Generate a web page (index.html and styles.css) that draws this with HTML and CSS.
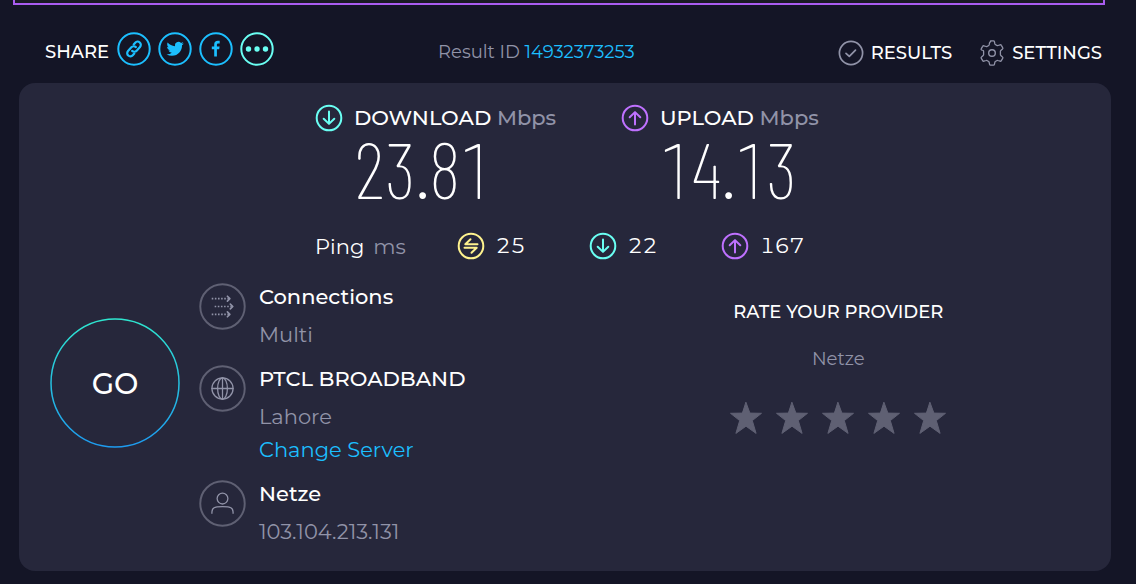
FILE: index.html
```html
<!DOCTYPE html>
<html lang="en">
<head>
<meta charset="utf-8">
<meta name="viewport" content="width=device-width, initial-scale=1">
<title>Speed test result</title>
<link rel="stylesheet" href="styles.css">
</head>
<body>
<svg class="defs" aria-hidden="true">
  <defs>
    <symbol id="down" viewBox="0 0 28 28"><circle cx="14" cy="14" r="12.3"/><path d="M14 7.5v12M8.7 14.7l5.3 5.2 5.3-5.2"/></symbol>
    <symbol id="up" viewBox="0 0 28 28"><circle cx="14" cy="14" r="12.3"/><path d="M14 20.5v-12M8.7 13.3L14 8.1l5.3 5.2"/></symbol>
    <symbol id="star" viewBox="0 0 34 34"><path d="M17 1.500l3.900 10.600 11.600.2-9.200 7.300 3.800 12.800L17 25.200 6.900 32.400l3.800-12.800-9.200-7.300 11.600-.2z"/></symbol>
  </defs>
</svg>

<div class="banner"></div>

<header class="topbar">
  <div class="share">
    <span class="share-label">SHARE</span>
    <button class="share-button" type="button" aria-label="Copy link">
      <svg viewBox="0 0 34 34"><circle cx="17" cy="17" r="15.700"/><g transform="rotate(-48 17 17)" stroke-width="2.200"><path d="M13.800 20.300h-2.300a3.200 3.200 0 0 1 0-6.400h5a3.200 3.200 0 0 1 3.200 3.200"/><path d="M20.200 13.700h2.300a3.200 3.200 0 0 1 0 6.400h-5a3.200 3.200 0 0 1-3.200-3.200"/></g></svg>
    </button>
    <button class="share-button" type="button" aria-label="Share on Twitter">
      <svg viewBox="0 0 34 34"><circle cx="17" cy="17" r="15.700"/><path class="solid" transform="translate(8.500 8.200) scale(.72)" d="M23.950 4.570a10 10 0 0 1-2.820.770 4.960 4.960 0 0 0 2.160-2.720c-.95.550-2 .96-3.130 1.180a4.920 4.920 0 0 0-8.380 4.480C7.690 8.090 4.070 6.130 1.640 3.160a4.820 4.820 0 0 0-.67 2.480c0 1.710.87 3.210 2.190 4.100a4.900 4.900 0 0 1-2.230-.62v.06a4.920 4.920 0 0 0 3.950 4.830 5 5 0 0 1-2.210.080 4.940 4.940 0 0 0 4.600 3.420A9.870 9.870 0 0 1 0 19.540a13.990 13.990 0 0 0 7.550 2.210c9.050 0 14-7.500 14-13.990 0-.210 0-.420-.02-.63a9.940 9.940 0 0 0 2.420-2.560z"/></svg>
    </button>
    <button class="share-button" type="button" aria-label="Share on Facebook">
      <svg viewBox="0 0 34 34"><circle cx="17" cy="17" r="15.700"/><path class="solid" d="M15.200 24.500v-7.200h-2.400v-2.800h2.400v-2.100c0-2.400 1.400-3.700 3.600-3.700.8 0 1.500.1 1.900.1v2.600h-1.400c-1.100 0-1.400.6-1.400 1.300v1.800h2.700l-.4 2.800h-2.300v7.200z"/></svg>
    </button>
    <button class="share-button more" type="button" aria-label="More sharing options">
      <svg viewBox="0 0 34 34"><circle cx="17" cy="17" r="15.700"/><g class="solid"><circle cx="8.500" cy="17" r="2.700"/><circle cx="17" cy="17" r="2.700"/><circle cx="25.500" cy="17" r="2.700"/></g></svg>
    </button>
  </div>
  <p class="result-id">Result ID <a href="#result">14932373253</a></p>
  <nav class="menu">
    <a href="#results"><svg viewBox="0 0 26 26"><circle cx="13" cy="13" r="11.600" stroke-width="1.700"/><path stroke-width="1.700" d="M8 13.300l3.300 3.100 6.200-6.300"/></svg>RESULTS</a>
    <a href="#settings"><svg viewBox="0 0 26 26"><path stroke-width="1.300" d="M11.600.8h2.800a1 1 0 0 1 1 .8l.5 2.300a1.200 1.200 0 0 0 .7.800l1.300.7a1.200 1.200 0 0 0 1 .1l2.200-.7a1 1 0 0 1 1.200.5l1.400 2.400a1 1 0 0 1-.2 1.300l-1.700 1.500a1.200 1.200 0 0 0-.4 1v3a1.200 1.200 0 0 0 .4 1l1.700 1.500a1 1 0 0 1 .2 1.300l-1.400 2.400a1 1 0 0 1-1.200.5l-2.200-.7a1.200 1.200 0 0 0-1 .1l-1.300.7a1.200 1.200 0 0 0-.7.800l-.5 2.300a1 1 0 0 1-1 .8h-2.800a1 1 0 0 1-1-.8l-.5-2.300a1.200 1.200 0 0 0-.7-.8l-1.300-.7a1.200 1.200 0 0 0-1-.1l-2.200.7a1 1 0 0 1-1.200-.5l-1.400-2.400a1 1 0 0 1 .2-1.300l1.700-1.500a1.200 1.200 0 0 0 .4-1v-3a1.200 1.200 0 0 0-.4-1L2.500 10a1 1 0 0 1-.2-1.300l1.400-2.400a1 1 0 0 1 1.200-.5l2.200.7a1.200 1.200 0 0 0 1-.1l1.300-.7a1.200 1.200 0 0 0 .7-.8l.5-2.300a1 1 0 0 1 1-.8z"/><circle cx="13" cy="13" r="3.300" stroke-width="1.400"/></svg>SETTINGS</a>
  </nav>
</header>

<main class="panel">
  <section class="speeds">
    <div class="speed">
      <svg class="ring teal"><use href="#down"/></svg>
      <h2>DOWNLOAD <small>Mbps</small></h2>
      <p class="value">23.81</p>
    </div>
    <div class="speed">
      <svg class="ring purple"><use href="#up"/></svg>
      <h2>UPLOAD <small>Mbps</small></h2>
      <p class="value">14.13</p>
    </div>
  </section>

  <section class="pings">
    <span class="ping-label">Ping <small>ms</small></span>
    <span class="ping"><svg class="ring yellow" viewBox="0 0 28 28"><circle cx="14" cy="14" r="12.300"/><path d="M20.500 12.300H8.300l5.200-5M7.500 15.700h12.200l-5.200 5"/></svg>25</span>
    <span class="ping"><svg class="ring teal"><use href="#down"/></svg>22</span>
    <span class="ping"><svg class="ring purple"><use href="#up"/></svg>167</span>
  </section>

  <section class="details">
    <button class="go" type="button">
      <svg viewBox="0 0 130 130" aria-hidden="true">
        <defs><linearGradient id="goRing" x1="0" y1="0" x2="0" y2="1"><stop offset="0" stop-color="#2ee6cf"/><stop offset="1" stop-color="#1d9bf0"/></linearGradient></defs>
        <circle cx="65" cy="65" r="64" stroke="url(#goRing)" stroke-width="1.500"/>
      </svg>
      <span>GO</span>
    </button>

    <ul class="info">
      <li>
        <svg class="badge" viewBox="0 0 48 48"><circle class="rim" cx="24" cy="24" r="22.700"/><path class="dots" d="M13 16h18M16 24h18M13 32h18"/><path d="M29 13.500l2.500 2.500-2.500 2.500M32 21.500l2.500 2.500-2.500 2.500M29 29.500l2.500 2.500-2.500 2.500" stroke-width="1.700"/></svg>
        <div><h3>Connections</h3><p>Multi</p></div>
      </li>
      <li>
        <svg class="badge" viewBox="0 0 48 48"><circle class="rim" cx="24" cy="24" r="22.700"/><circle cx="24" cy="24" r="10.800"/><ellipse cx="24" cy="24" rx="5" ry="10.800"/><path d="M24 13.200v21.600M13.200 24h21.600"/></svg>
        <div><h3>PTCL BROADBAND</h3><p>Lahore</p><a href="#servers">Change Server</a></div>
      </li>
      <li>
        <svg class="badge" viewBox="0 0 48 48"><circle class="rim" cx="24" cy="24" r="22.700"/><circle cx="24" cy="19" r="5.500"/><path d="M13.200 34v-1.200c0-3 2-5 5.200-5.300 3.700-.4 7.500-.4 11.200 0 3.200.3 5.200 2.300 5.200 5.300v1.200"/></svg>
        <div><h3>Netze</h3><p>103.104.213.131</p></div>
      </li>
    </ul>

    <div class="rating">
      <h2>RATE YOUR PROVIDER</h2>
      <p>Netze</p>
      <div class="stars">
        <button type="button" aria-label="1 star"><svg><use href="#star"/></svg></button>
        <button type="button" aria-label="2 stars"><svg><use href="#star"/></svg></button>
        <button type="button" aria-label="3 stars"><svg><use href="#star"/></svg></button>
        <button type="button" aria-label="4 stars"><svg><use href="#star"/></svg></button>
        <button type="button" aria-label="5 stars"><svg><use href="#star"/></svg></button>
      </div>
    </div>
  </section>
</main>
</body>
</html>
```
FILE: styles.css
```css
* { box-sizing: border-box; margin: 0; padding: 0; }

body {
  background: #141526;
  color: #fff;
  font-family: Montserrat, Inter, sans-serif;
  font-size: 21px;
  line-height: 28px;
}

a { color: #1cbfff; text-decoration: none; }
button { background: none; border: 0; color: inherit; font: inherit; cursor: pointer; }
small { color: #9193a8; font-size: inherit; }
svg { display: block; fill: none; stroke: currentColor; stroke-linecap: round; stroke-linejoin: round; }
.defs { position: absolute; width: 0; height: 0; }
.solid { fill: currentColor; stroke: none; }

.banner {
  height: 5px;
  margin: 0 31px 0 13px;
  background: #1a1a24;
  border: 2px solid #a95cf0;
  border-top: 0;
}

/* Top bar */
.topbar {
  display: grid;
  grid-template-columns: 393px 1fr auto;
  align-items: center;
  height: 78px;
  padding: 18px 34px 0 45px;
}
.share { display: flex; align-items: center; gap: 7px; padding-bottom: 8px; }
.share-label { width: 65px; font-size: 18px; font-weight: 500; padding-top: 5px; }
.share-button { width: 34px; height: 34px; color: #1cbfff; stroke-width: 2; }
.share-button.more { color: #6afff3; }
.result-id { color: #9193a8; font-size: 18px; padding-bottom: 3px; }
.menu { display: flex; gap: 27px; font-size: 18px; font-weight: 500; }
.menu a { display: flex; align-items: center; gap: 7px; color: #fff; }
.menu svg { width: 26px; height: 26px; color: #9193a8; }

/* Result panel */
.panel {
  margin: 0 25px 13px 19px;
  padding: 21px 33px 25px 31px;
  background: #26273b;
  border-radius: 16px;
}
.ring { width: 28px; height: 28px; stroke-width: 2; }
.teal { color: #6afff3; }
.purple { color: #bf71ff; }
.yellow { color: #fff38e; }

.speeds {
  display: grid;
  grid-template-columns: 306px 192px;
  justify-content: center;
}
.speed {
  display: grid;
  grid-template-columns: 28px max-content;
  column-gap: 11px;
}
.speed h2 { font-size: 21px; font-weight: 500; }
.value {
  grid-column: 2;
  font-family: "Barlow Condensed", "Roboto Condensed", Roboto, sans-serif;
  font-size: 78px;
  font-weight: 200;
  font-variant-numeric: tabular-nums;
  line-height: 72px;
  padding-bottom: 8px;
}

.pings {
  display: grid;
  grid-template-columns: 142px 132px 132px 92px;
  justify-content: center;
  padding-top: 20px;
}
.ping-label { display: flex; gap: 9px; padding-top: 1px; }
.ping { display: flex; gap: 11px; font-variant-numeric: tabular-nums; }

.details {
  display: grid;
  grid-template-columns: 149px 5fr 6fr;
  align-items: start;
  padding-top: 22px;
}
.go {
  display: grid;
  place-items: center;
  width: 130px;
  height: 130px;
  margin-top: 35px;
  font-size: 29px;
  font-weight: 500;
}
.go svg, .go span { grid-area: 1 / 1; }
.go svg { width: 130px; height: 130px; }
.go span { padding-top: 2px; }

.info { display: grid; gap: 16px; list-style: none; }
.info li { display: flex; gap: 13px; }
.info h3 { font-size: 21px; font-weight: 500; }
.info p { padding-top: 10px; color: #9193a8; }
.info a { display: block; padding-top: 5px; }
.badge { width: 47px; height: 47px; color: #9193a8; stroke-width: 1.3; }
.badge .rim { stroke: #5f6073; stroke-width: 2; }
.badge .dots { stroke-width: 1.7; stroke-dasharray: 1.6 1.6; stroke-linecap: butt; }

.rating { padding-top: 15px; text-align: center; }
.rating h2 { font-size: 18px; font-weight: 500; }
.rating p { padding-top: 19px; color: #9193a8; font-size: 18px; }
.stars { display: flex; justify-content: center; gap: 12px; padding-top: 28px; color: #5f6073; }
.stars svg { width: 34px; height: 34px; fill: currentColor; stroke-width: 1; }
```
